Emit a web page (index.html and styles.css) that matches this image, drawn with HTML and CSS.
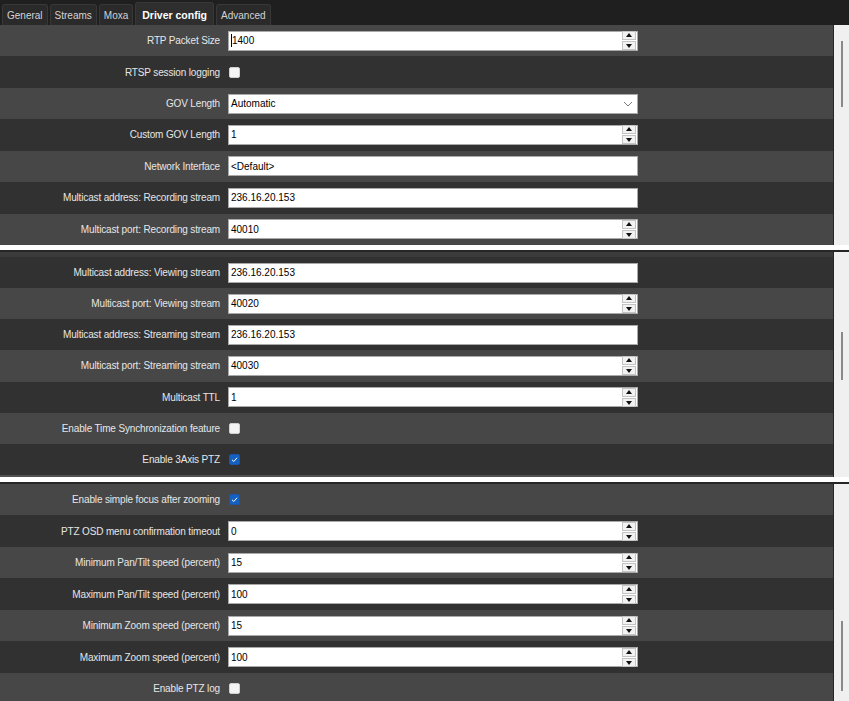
FILE: index.html
```html
<!DOCTYPE html>
<html lang="en">
<head>
    <meta charset="UTF-8">
    <title>Driver config</title>
    <link rel="stylesheet" href="styles.css">
</head>
<body>
    <div class="tabs">
        <span class="tab">General</span>
        <span class="tab">Streams</span>
        <span class="tab">Moxa</span>
        <span class="tab active">Driver config</span>
        <span class="tab">Advanced</span>
    </div>

    <!-- first view -->
    <section class="panel p1">
        <div class="rows">
            <div class="row light">
                <label>RTP Packet Size</label>
                <div class="field num"><span class="val"><i class="caret"></i>1400</span><span class="spin"><b class="up"></b><b class="down"></b></span></div>
            </div>
            <div class="row dark">
                <label>RTSP session logging</label>
                <span class="check"></span>
            </div>
            <div class="row light">
                <label>GOV Length</label>
                <div class="field select"><span class="val">Automatic</span>
                    <svg class="chev" width="10" height="6" viewBox="0 0 10 6"><polyline points="1,1 5,5 9,1" fill="none" stroke="#777" stroke-width="1"/></svg>
                </div>
            </div>
            <div class="row dark">
                <label>Custom GOV Length</label>
                <div class="field num"><span class="val">1</span><span class="spin"><b class="up"></b><b class="down"></b></span></div>
            </div>
            <div class="row light">
                <label>Network Interface</label>
                <div class="field"><span class="val">&lt;Default&gt;</span></div>
            </div>
            <div class="row dark">
                <label>Multicast address: Recording stream</label>
                <div class="field"><span class="val">236.16.20.153</span></div>
            </div>
            <div class="row light">
                <label>Multicast port: Recording stream</label>
                <div class="field num"><span class="val">40010</span><span class="spin"><b class="up"></b><b class="down"></b></span></div>
            </div>
        </div>
        <div class="scroll"><span class="thumb"></span></div>
    </section>

    <div class="gap"></div>

    <!-- second view -->
    <section class="panel p2">
        <div class="rows">
            <div class="strip"></div>
            <div class="row dark">
                <label>Multicast address: Viewing stream</label>
                <div class="field"><span class="val">236.16.20.153</span></div>
            </div>
            <div class="row light">
                <label>Multicast port: Viewing stream</label>
                <div class="field num"><span class="val">40020</span><span class="spin"><b class="up"></b><b class="down"></b></span></div>
            </div>
            <div class="row dark">
                <label>Multicast address: Streaming stream</label>
                <div class="field"><span class="val">236.16.20.153</span></div>
            </div>
            <div class="row light">
                <label>Multicast port: Streaming stream</label>
                <div class="field num"><span class="val">40030</span><span class="spin"><b class="up"></b><b class="down"></b></span></div>
            </div>
            <div class="row dark">
                <label>Multicast TTL</label>
                <div class="field num"><span class="val">1</span><span class="spin"><b class="up"></b><b class="down"></b></span></div>
            </div>
            <div class="row light">
                <label>Enable Time Synchronization feature</label>
                <span class="check"></span>
            </div>
            <div class="row dark">
                <label>Enable 3Axis PTZ</label>
                <span class="check on"><svg width="11" height="11" viewBox="0 0 11 11"><polyline points="3,5.8 4.8,7.5 8,3.8" fill="none" stroke="#fff" stroke-width="1"/></svg></span>
            </div>
            <div class="edge"></div>
        </div>
        <div class="scroll"><span class="thumb"></span></div>
    </section>

    <div class="gap"></div>

    <!-- third view -->
    <section class="panel p3">
        <div class="rows">
            <div class="row light">
                <label>Enable simple focus after zooming</label>
                <span class="check on"><svg width="11" height="11" viewBox="0 0 11 11"><polyline points="3,5.8 4.8,7.5 8,3.8" fill="none" stroke="#fff" stroke-width="1"/></svg></span>
            </div>
            <div class="row dark">
                <label>PTZ OSD menu confirmation timeout</label>
                <div class="field num"><span class="val">0</span><span class="spin"><b class="up"></b><b class="down"></b></span></div>
            </div>
            <div class="row light">
                <label>Minimum Pan/Tilt speed (percent)</label>
                <div class="field num"><span class="val">15</span><span class="spin"><b class="up"></b><b class="down"></b></span></div>
            </div>
            <div class="row dark">
                <label>Maximum Pan/Tilt speed (percent)</label>
                <div class="field num"><span class="val">100</span><span class="spin"><b class="up"></b><b class="down"></b></span></div>
            </div>
            <div class="row light">
                <label>Minimum Zoom speed (percent)</label>
                <div class="field num"><span class="val">15</span><span class="spin"><b class="up"></b><b class="down"></b></span></div>
            </div>
            <div class="row dark">
                <label>Maximum Zoom speed (percent)</label>
                <div class="field num"><span class="val">100</span><span class="spin"><b class="up"></b><b class="down"></b></span></div>
            </div>
            <div class="row light">
                <label>Enable PTZ log</label>
                <span class="check"></span>
            </div>
        </div>
        <div class="scroll"><span class="thumb"></span></div>
    </section>
</body>
</html>
```

FILE: styles.css
```css
body {
    margin: 0;
    background: #fff;
    font-family: "Liberation Sans", Arial, sans-serif;
    font-size: 11px;
    overflow: hidden;
    height: 701px;
}

.tabs {
    display: flex;
    align-items: flex-end;
    gap: 2px;
    height: 25px;
    padding-left: 2px;
    background: #1f1f1f;
}
.tab {
    height: 20px;
    line-height: 21px;
    padding: 0 4px;
    color: #d4d4d4;
    background: #2a2a2a;
    border: 1px solid #383838;
    border-bottom: none;
    border-radius: 3px 3px 0 0;
    font-size: 10px;
}
.tab.active {
    color: #fff;
    font-weight: bold;
    background: #2e2e2e;
    padding: 0 6px;
    height: 22px;
    line-height: 24px;
    font-size: 10.5px;
}

.panel {
    display: flex;
}
.rows {
    flex: 1;
    overflow: hidden;
}
.p1 .rows { --row: 31.43px; }
.p2 .rows { --row: 31.15px; }
.p3 .rows { --row: 31.5px; height: 217px; }

.row {
    display: flex;
    align-items: center;
    gap: 8px;
    height: var(--row);
}
.row.light { background: #474747; }
.row.dark { background: #313131; }

.row label {
    width: 220px;
    text-align: right;
    color: #e6e6e6;
    font-size: 10px;
    letter-spacing: -0.15px;
}

.strip {
    height: 5px;
    background: #3b3b3b;
}
.edge {
    height: 2px;
    background: #505050;
}

.field {
    display: flex;
    align-items: center;
    width: 408px;
    height: 18px;
    background: #fff;
    border: 1px solid #a9a9a9;
    color: #000;
    font-size: 10px;
}
.field .val {
    flex: 1;
    padding-left: 2px;
    display: flex;
    align-items: center;
}
.caret {
    display: inline-block;
    width: 1px;
    height: 13px;
    background: #000;
}
.field .chev {
    margin-right: 4px;
}

.spin {
    display: flex;
    flex-direction: column;
    gap: 1px;
    margin-right: 1px;
}
.spin b {
    display: block;
    width: 12px;
    height: 7px;
    background: #f2f2f2;
    border: 1px solid #c4c4c4;
    position: relative;
}
.spin b::after {
    content: "";
    position: absolute;
    left: 3px;
    border-left: 3px solid transparent;
    border-right: 3px solid transparent;
}
.spin .up::after {
    top: 1px;
    border-bottom: 4px solid #111;
}
.spin .down::after {
    top: 2px;
    border-top: 4px solid #111;
}

.check {
    width: 11px;
    height: 11px;
    box-sizing: border-box;
    margin-left: 1px;
    background: #f4f4f4;
    border: 1px solid #cfcfcf;
    border-radius: 2px;
    display: flex;
}
.check.on {
    background: #1560c0;
    border-color: #1a56a8;
}
.check svg {
    margin: -1px;
}

.scroll {
    width: 15px;
    background: #f0f0f0;
    border-left: 1px solid #262626;
}
.thumb {
    display: block;
    width: 2px;
    margin-left: 7px;
    background: #8a8a8a;
}
.p1 .thumb { margin-top: 16px; height: 66px; }
.p2 .thumb { margin-top: 80px; height: 48px; }
.p3 .thumb { margin-top: 137px; height: 70px; }

.gap {
    height: 5px;
    background: #fff;
    border-bottom: 2px solid #262626;
}
```
